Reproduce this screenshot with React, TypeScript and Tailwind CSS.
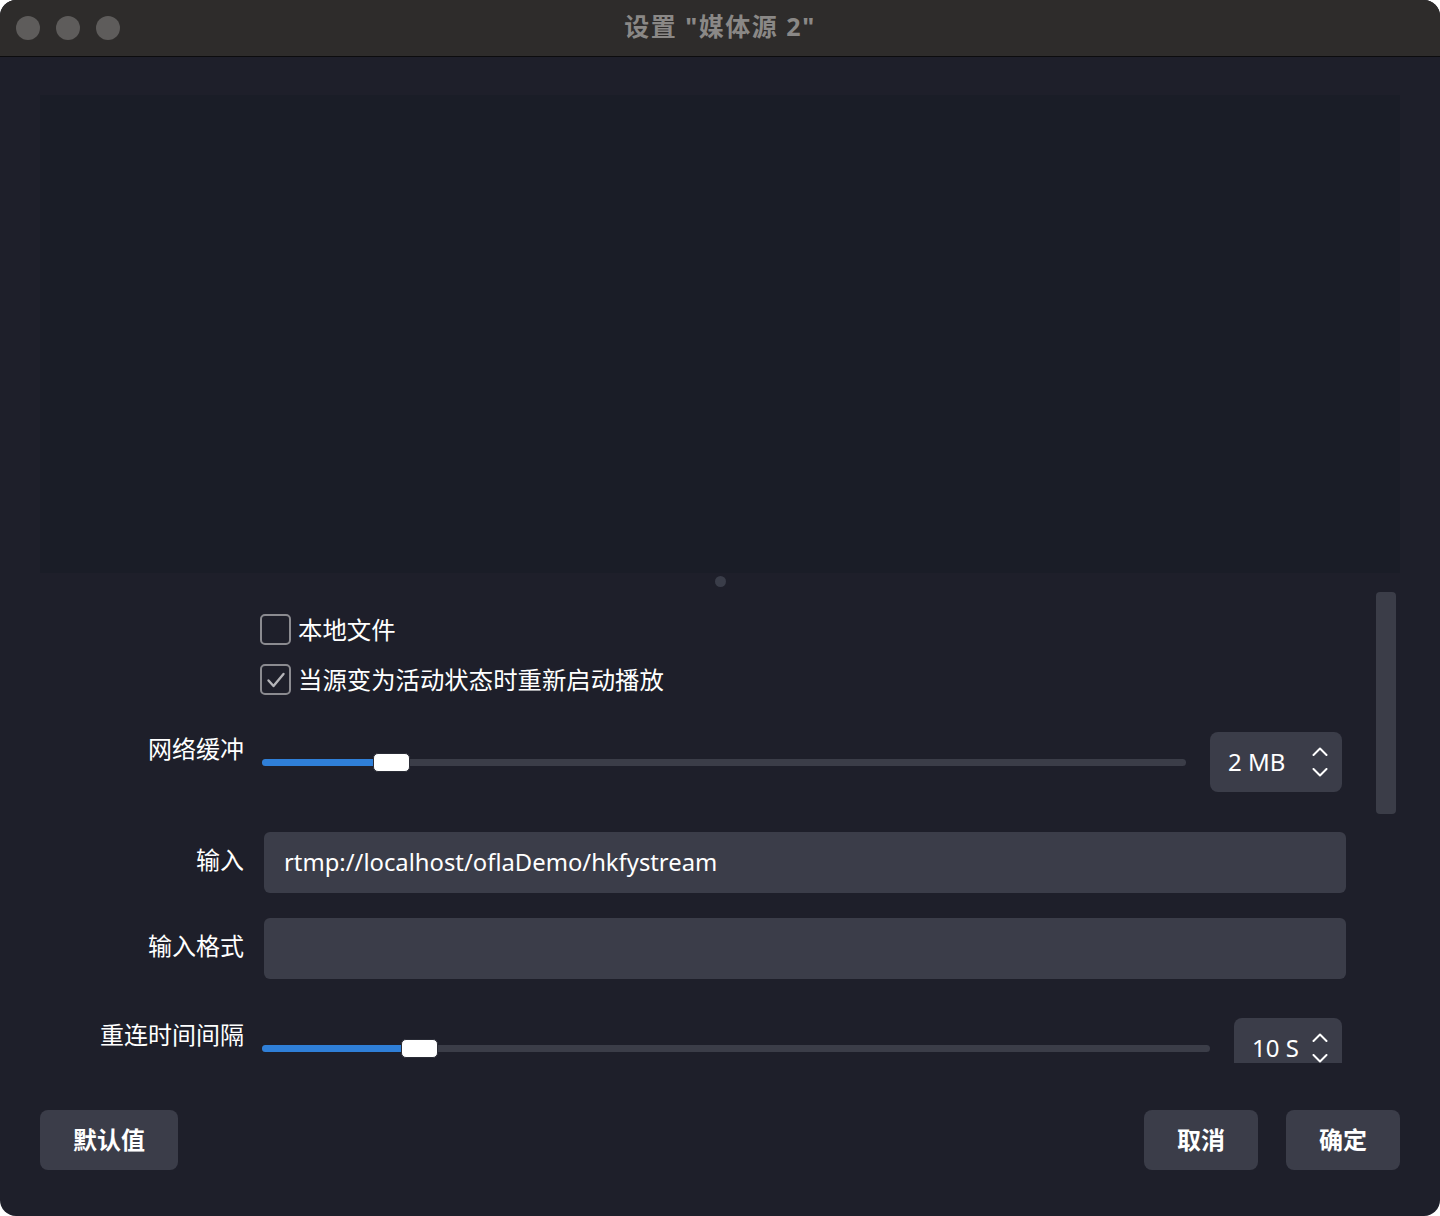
import React from "react";

const font = { fontFamily: '"Noto Sans", "Noto Sans CJK SC", sans-serif' };

function Checkbox({ checked, label }: { checked?: boolean; label: string }) {
  return (
    <div className="flex items-center h-[31px] shrink-0 ml-[220px] gap-[7px]">
      <div className="w-[31px] h-[31px] rounded-[5px] border-2 border-[#8b8b90] flex items-center justify-center">
        {checked && (
          <svg width="22" height="22" viewBox="0 0 22 22" fill="none">
            <path d="M3.5 11.5 L8.5 17 L18.5 5" stroke="#b4b4b8" strokeWidth="2.4" strokeLinecap="round" strokeLinejoin="round" />
          </svg>
        )}
      </div>
      <span className="text-[24.4px] leading-[32px] text-white">{label}</span>
    </div>
  );
}

function Slider({ fill, handle }: { fill: number; handle: number }) {
  return (
    <div className="relative flex-1 h-[20px] flex items-center">
      <div className="w-full h-[7px] rounded-full bg-[#3b3d48]" />
      <div className="absolute left-0 h-[7px] rounded-l-full bg-[#2f7fd8]" style={{ width: fill }} />
      <div
        className="absolute h-[19px] w-[37px] rounded-[5px] bg-white border border-[#2a2c36]"
        style={{ left: handle }}
      />
    </div>
  );
}

function Spin({ value, width }: { value: string; width: string }) {
  return (
    <div className={`${width} h-[60px] shrink-0 rounded-[8px] bg-[#3b3d49] flex items-center pl-[18px] pr-[14px] justify-between`}>
      <span className="text-[24px] text-white">{value}</span>
      <div className="flex flex-col gap-[12px]">
        <svg width="16" height="9" viewBox="0 0 16 9" fill="none">
          <path d="M1.5 8 L8 1.5 L14.5 8" stroke="white" strokeWidth="2" strokeLinecap="round" strokeLinejoin="round" />
        </svg>
        <svg width="16" height="9" viewBox="0 0 16 9" fill="none">
          <path d="M1.5 1 L8 7.5 L14.5 1" stroke="white" strokeWidth="2" strokeLinecap="round" strokeLinejoin="round" />
        </svg>
      </div>
    </div>
  );
}

function Label({ text, top }: { text: string; top?: boolean }) {
  return (
    <div className={`w-[204px] shrink-0 text-right text-[24px] leading-[32px] text-white ${top ? "pt-[1px] self-start" : "-mt-[6px]"}`}>
      {text}
    </div>
  );
}

export default function App() {
  return (
    <div className="w-[1440px] h-[1216px] bg-white" style={font}>
      <div className="w-full h-full rounded-[16px] overflow-hidden flex flex-col bg-[#1e1f2a]">
        {/* title bar */}
        <div className="relative h-[57px] shrink-0 bg-[#2e2c2b] border-b border-[#0c0c0e] flex items-center justify-center">
          <div className="absolute left-[16px] top-[16px] flex gap-[16px]">
            <div className="w-[24px] h-[24px] rounded-full bg-[#5e5c5b]" />
            <div className="w-[24px] h-[24px] rounded-full bg-[#5e5c5b]" />
            <div className="w-[24px] h-[24px] rounded-full bg-[#5e5c5b]" />
          </div>
          <span className="text-[25px] tracking-[1.5px] font-bold text-[#8a8886] -mt-[2px]">设置 "媒体源 2"</span>
        </div>

        <div className="flex-1 flex flex-col px-[40px]">
          {/* preview */}
          <div className="mt-[38px] h-[478px] shrink-0 bg-[#1a1d27]" />
          <div className="h-[19px] shrink-0 flex justify-center items-start pt-[3px]">
            <div className="w-[11px] h-[11px] rounded-full bg-[#3a3d49]" />
          </div>

          {/* properties scroll area */}
          <div className="h-[471px] shrink-0 overflow-hidden flex">
            <div className="w-[1306px] flex flex-col pt-[22px]">
              <Checkbox label="本地文件" />
              <div className="mt-[19px] shrink-0">
                <Checkbox checked label="当源变为活动状态时重新启动播放" />
              </div>

              <div className="mt-[37px] h-[60px] shrink-0 flex items-center pr-[4px]">
                <Label text="网络缓冲" top />
                <div className="ml-[18px] flex-1 flex items-center gap-[24px]">
                  <Slider fill={118} handle={111} />
                  <Spin value="2 MB" width="w-[132px]" />
                </div>
              </div>

              <div className="mt-[40px] h-[61px] shrink-0 flex items-center">
                <Label text="输入" />
                <div className="ml-[20px] flex-1 h-full rounded-[6px] bg-[#3b3d49] flex items-center px-[20px] text-[23.8px] text-white">
                  rtmp://localhost/oflaDemo/hkfystream
                </div>
              </div>

              <div className="mt-[25px] h-[61px] shrink-0 flex items-center">
                <Label text="输入格式" />
                <div className="ml-[20px] flex-1 h-full rounded-[6px] bg-[#3b3d49]" />
              </div>

              <div className="mt-[39px] h-[60px] shrink-0 flex items-center pr-[4px]">
                <Label text="重连时间间隔" top />
                <div className="ml-[18px] flex-1 flex items-center gap-[24px]">
                  <Slider fill={146} handle={139} />
                  <Spin value="10 S" width="w-[108px]" />
                </div>
              </div>
            </div>
            <div className="ml-[30px] w-[20px]">
              <div className="h-[222px] w-[20px] rounded-[4px] bg-[#3b3d48]" />
            </div>
          </div>

          {/* buttons */}
          <div className="mt-[47px] flex items-center">
            <button className="w-[138px] h-[60px] rounded-[8px] bg-[#3b3d49] text-white text-[24px] font-semibold">默认值</button>
            <div className="flex-1" />
            <button className="w-[114px] h-[60px] rounded-[8px] bg-[#3b3d49] text-white text-[24px] font-semibold">取消</button>
            <button className="ml-[28px] w-[114px] h-[60px] rounded-[8px] bg-[#3b3d49] text-white text-[24px] font-semibold">确定</button>
          </div>
        </div>
      </div>
    </div>
  );
}
